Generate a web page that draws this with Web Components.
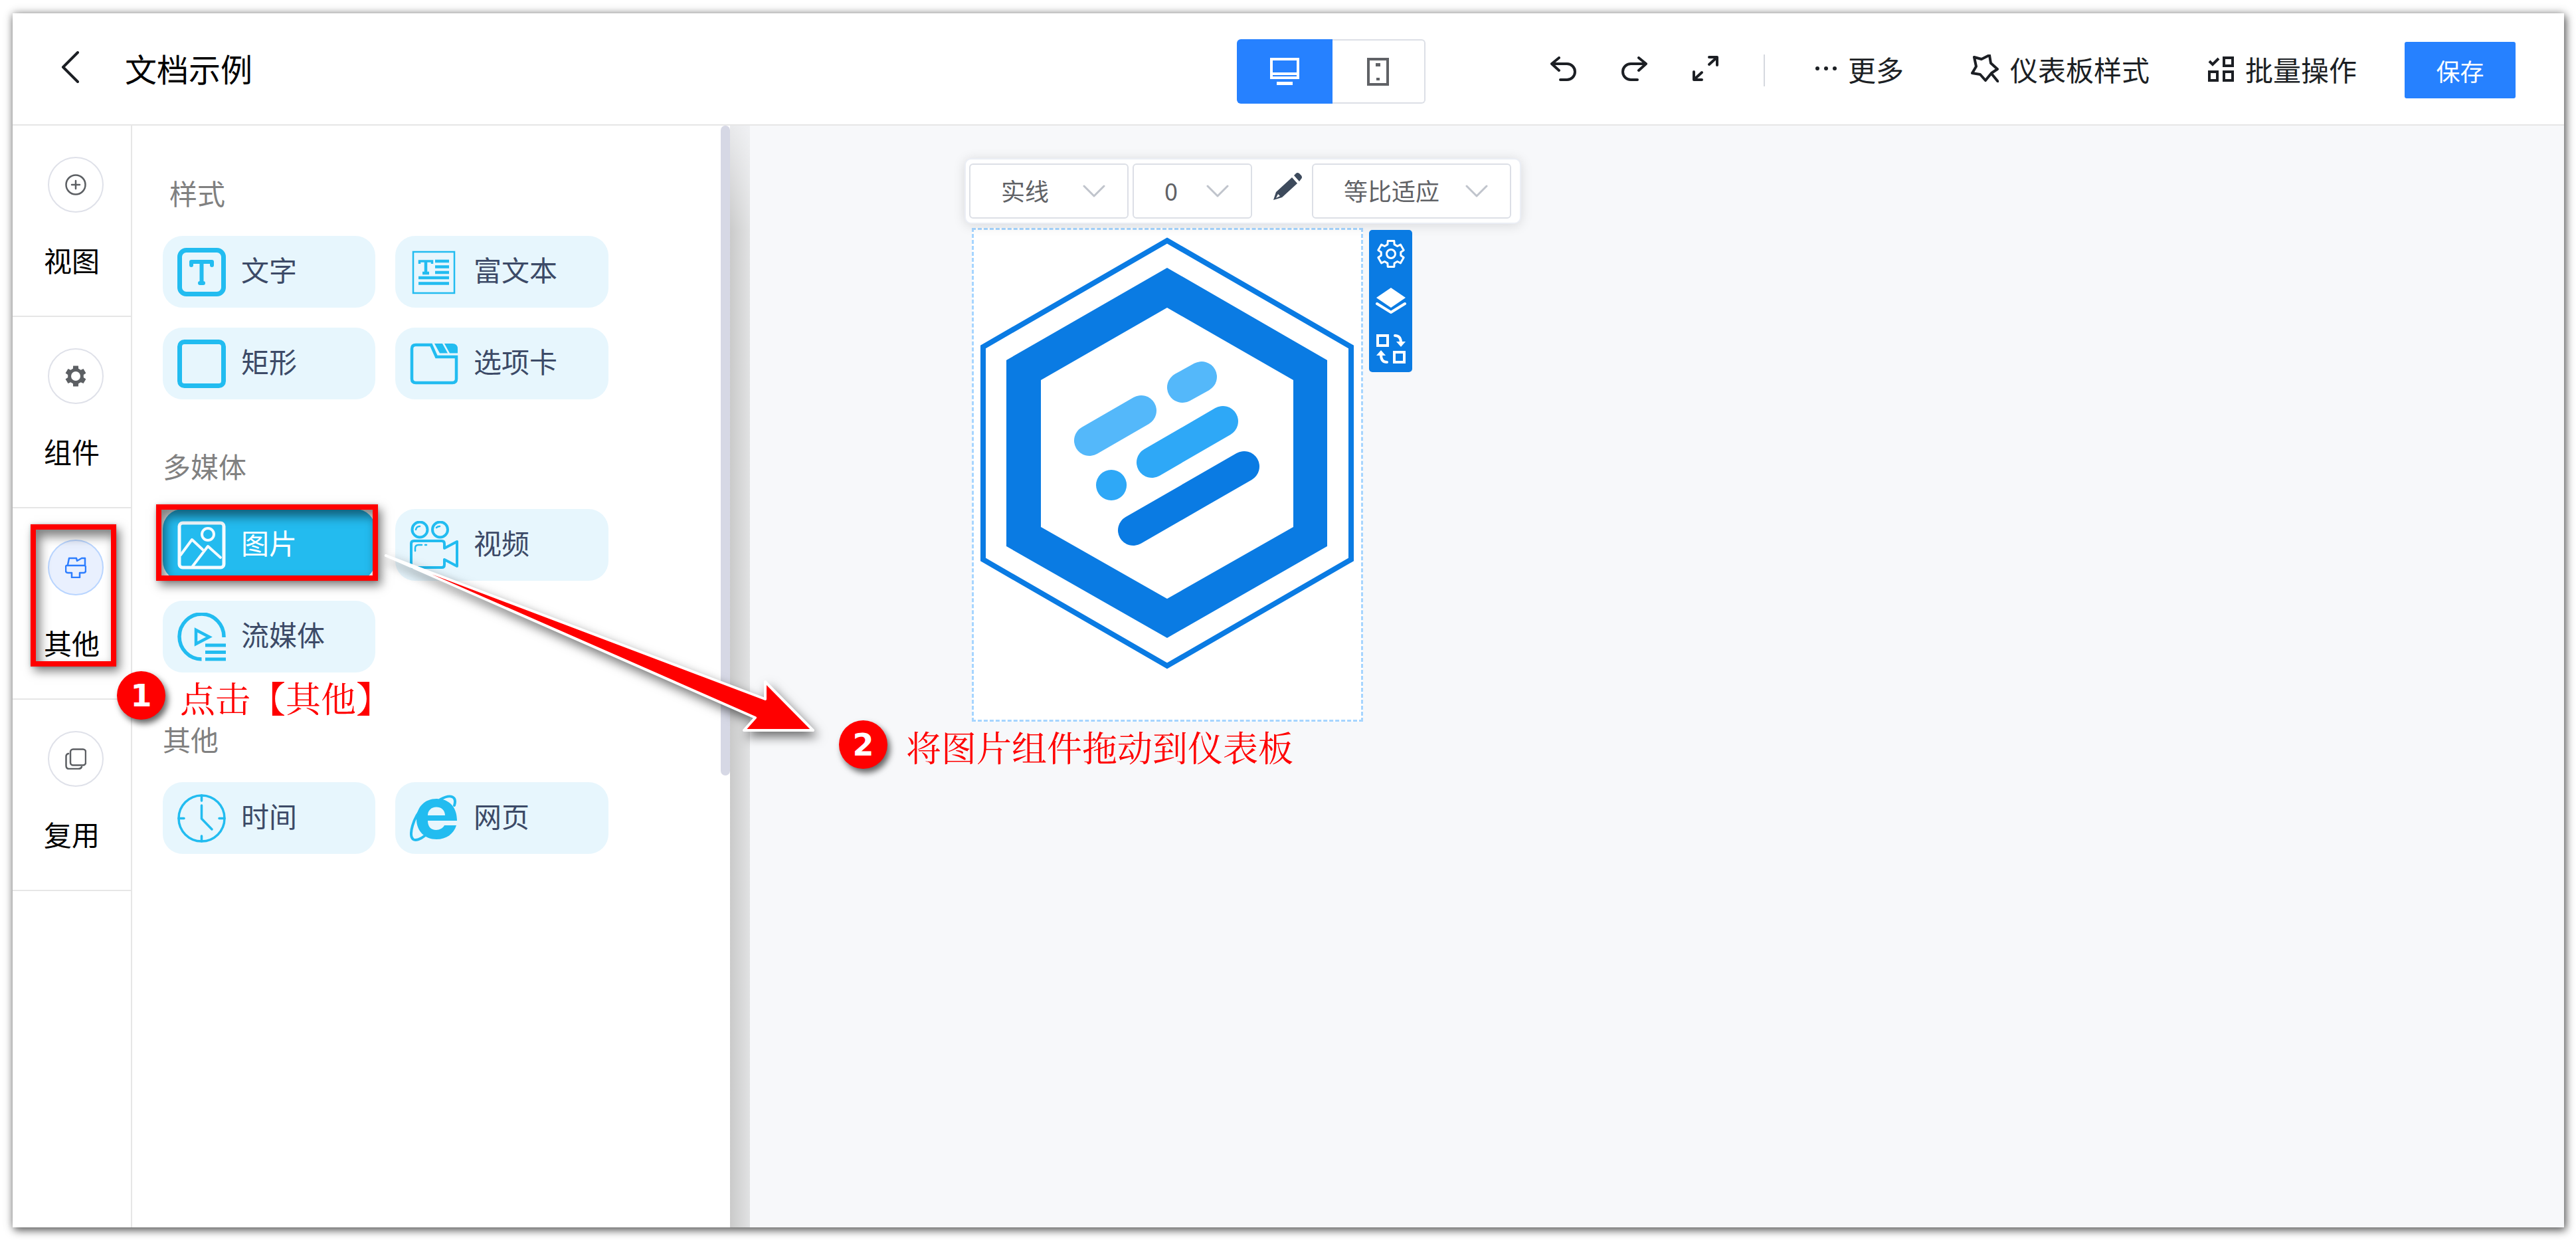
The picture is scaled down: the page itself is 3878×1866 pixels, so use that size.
<!DOCTYPE html>
<html lang="zh-CN">
<head>
<meta charset="utf-8">
<title>文档示例</title>
<style>
  html, body { margin: 0; height: 100%; background: #fff; overflow: hidden; }
  body {
    display: flex;
    box-sizing: border-box;
    padding: 20px 18px 19px 19px;
    font-family: "Noto Sans CJK SC", sans-serif;
    font-size: 42px;
    color: #000;
  }
</style>
</head>
<body>
<dash-editor>
  <editor-header slot="header" heading="文档示例">
    <device-toggle slot="tools"></device-toggle>
    <tool-button slot="tools" icon="undo" label="撤销"></tool-button>
    <tool-button slot="tools" icon="redo" label="恢复"></tool-button>
    <tool-button slot="tools" icon="expand" label="全屏"></tool-button>
    <tool-divider slot="tools"></tool-divider>
    <tool-button slot="tools" class="more" icon="dots">更多</tool-button>
    <tool-button slot="tools" class="theme" icon="star">仪表板样式</tool-button>
    <tool-button slot="tools" class="batch" icon="batch">批量操作</tool-button>
    <save-button slot="tools">保存</save-button>
  </editor-header>

  <nav-rail slot="rail">
    <rail-item icon="plus">视图</rail-item>
    <rail-item icon="gear">组件</rail-item>
    <rail-item icon="brush" active>其他</rail-item>
    <rail-item icon="copy">复用</rail-item>
  </nav-rail>

  <component-panel slot="panel">
    <component-group heading="样式" indent>
      <component-card icon="text">文字</component-card>
      <component-card icon="rich">富文本</component-card>
      <component-card icon="rect">矩形</component-card>
      <component-card icon="tabs">选项卡</component-card>
    </component-group>
    <component-group heading="多媒体">
      <component-card icon="image" active>图片</component-card>
      <component-card icon="video">视频</component-card>
      <component-card icon="stream">流媒体</component-card>
    </component-group>
    <component-group heading="其他">
      <component-card icon="clock">时间</component-card>
      <component-card icon="web">网页</component-card>
    </component-group>
  </component-panel>

  <design-canvas slot="canvas">
    <image-widget></image-widget>
    <border-toolbar></border-toolbar>
    <widget-actions></widget-actions>
  </design-canvas>

  <highlight-box slot="notes" class="nav"></highlight-box>
  <highlight-box slot="notes" class="card"></highlight-box>
  <drag-arrow slot="notes"></drag-arrow>
  <step-note slot="notes" class="one" number="1">点击【其他】</step-note>
  <step-note slot="notes" class="two" number="2">将图片组件拖动到仪表板</step-note>
</dash-editor>

<script>
const gear = (c, outer, inner) => {
  const pts = [];
  for (let i = 0; i < 6; i++) {
    const a = i * 60 - 90;
    for (const [d, r] of [[-20, inner], [-14, outer], [14, outer], [20, inner]]) {
      const t = (a + d) * Math.PI / 180;
      pts.push((c + r * Math.cos(t)).toFixed(1) + ',' + (c + r * Math.sin(t)).toFixed(1));
    }
  }
  return pts.join(' ');
};

// name: [width, height, markup]
const ICONS = {
  back: [28, 48, '<path d="M25 2 3 24 25 46" stroke-width="4"/>'],
  undo: [39, 37, '<path d="M13 2 2 11 13 21M2 11H25A12 12 0 0 1 25 35H15" stroke-width="4"/>'],
  redo: [39, 37, '<path d="M26 2 37 11 26 21M37 11H14A12 12 0 0 0 14 35H24" stroke-width="4"/>'],
  expand: [39, 38, '<path d="M25 2H37V14M36 3 25 13M2 24V36H14M3 35 14 25" stroke-width="4"/>'],
  dots: [32, 8, '<g fill="currentColor" stroke="none"><circle cx="3" cy="4" r="3"/><circle cx="16" cy="4" r="3"/><circle cx="29" cy="4" r="3"/></g>'],
  star: [42, 42, '<path d="M5 4 16 7 28 1 30 13 40 22 31 28 22 39 14 30 2 28 8 18ZM32 30 41 41" stroke-width="4"/>'],
  batch: [39, 39, '<path d="M2 8 7 13 16 4M24 3H37V15H24ZM2 24H14V37H2ZM24 24H37V37H24Z" stroke-width="4" stroke-linecap="butt" stroke-linejoin="miter"/>'],
  monitor: [44, 42, '<path fill="currentColor" stroke="none" fill-rule="evenodd" d="M0 0H44V32H0ZM4 4V22H40V4ZM4 26V28H40V26ZM10 36H34V41H10Z"/>'],
  phone: [33, 42, '<path d="M2 2H31V40H2Z" stroke-width="4" stroke-linejoin="miter"/><path d="M13 8H20V13H13ZM14 30H19V34H14Z" fill="currentColor" stroke="none"/>'],
  plus: [32, 32, '<circle cx="16" cy="16" r="14.5" stroke-width="2.5"/><path d="M16 10V22M10 16H22" stroke-width="2.5"/>'],
  gear: [32, 32, '<polygon points="' + gear(16, 16, 12) + '" fill="currentColor" stroke="none"/><circle cx="16" cy="16" r="7" fill="#fff" stroke="none"/>'],
  brush: [32, 32, '<path d="M6 2H17L18 6 25 2H30V13L31 15V21Q31 24 28 24H22V31H10V24H4Q1 24 1 21V14L4 12ZM2 13H30" stroke-width="2.5"/>'],
  copy: [32, 32, '<rect x="8" y="1.5" width="23" height="24" rx="4" stroke-width="2.5"/><path d="M5 8Q1.500 9 1.500 12V26Q1.500 31 6 31H20Q24 31 25 28" stroke-width="2.5"/>'],
  text: [73, 73, '<rect x="3.500" y="3.500" width="66" height="66" rx="10" stroke-width="7"/><path d="M21 26V21H52V26M36.500 21V53M34 53H39" stroke-width="6"/>'],
  rich: [73, 73, '<rect x="5" y="6" width="62" height="62" stroke-width="2.500" stroke-linejoin="miter"/><path d="M14.500 24V20H33.500V24" stroke-width="3.500" stroke-linecap="butt" stroke-linejoin="miter"/><path d="M24 20V38M19 38H29" stroke-width="4.500" stroke-linecap="butt"/><path d="M38 20H59M38 28.500H59M38 37H59M13 45H59M13 53.500H59" stroke-width="4.500" stroke-linecap="butt"/>'],
  rect: [73, 73, '<rect x="3.500" y="3.500" width="66" height="66" rx="7" stroke-width="7"/>'],
  tabs: [73, 73, '<path d="M9 8H32L40 26H70V59Q70 65 64 65H9Q3 65 3 59V14Q3 8 9 8Z" stroke-width="4.500" stroke-linejoin="miter"/><path d="M37 6H49L57 20.500H45ZM52 6H64Q72 6 72 14V20.500H60Z" fill="currentColor" stroke="none"/>'],
  image: [73, 73, '<rect x="3" y="3" width="67" height="67" rx="5" stroke-width="5"/><circle cx="46" cy="20" r="9" stroke-width="4"/><path d="M5 51 22 28 38 43M23 68 46 38 65 55" stroke-width="4"/>'],
  video: [73, 73, '<circle cx="15" cy="13" r="11.500" stroke-width="4"/><circle cx="45.500" cy="13" r="11.500" stroke-width="4"/><path d="M6 30H48Q52 30 52 34V41L71 31V68L52 58V66Q52 70 48 70H6Q2 70 2 66V34Q2 30 6 30Z" stroke-width="4"/><path d="M8 45V41Q8 36 13 36H18M23 36H25M9 13Q10 8 15 8M40 10Q42 8 45 8" stroke-width="2.500"/>'],
  stream: [73, 73, '<path d="M70 37A33.500 34 0 1 0 36.500 70" stroke-width="5.500" stroke-linecap="butt"/><path d="M28 26V47L48 36.500Z" stroke-width="4.500" stroke-linejoin="miter"/><path d="M42 49H73M42 59.500H73M42 70H73" stroke-width="5" stroke-linecap="butt"/>'],
  clock: [73, 73, '<circle cx="36.500" cy="36.500" r="34.500" stroke-width="3.500"/><path d="M36.500 2V10M36.500 63V71M2 36.500H10M63 36.500H71M36.500 17V37L52 53" stroke-width="3.500"/>'],
  web: [73, 73, '<path d="M71 40H27C27 49 32 54 39.500 54 45 54 50 51 52 47H70C66 60 55 68 40 68 22 68 10 55 10 38 10 19 23 7 40 7 60 7 71 20 71 40ZM27 32H53C53 24 47 19.500 40 19.500 32 19.500 27 25 27 32Z" fill="currentColor" fill-rule="evenodd" stroke="none"/><path d="M67 17C71 4 62 -1 46 8M21 18C4 36-2 62 5 68 9 71 17 67 22 63" stroke-width="4"/>'],
  chevron: [34, 20, '<path d="M2 2 17 17 32 2" stroke-width="3"/>'],
  pencil: [44, 42, '<path d="M31 4 34 1Q36-1 39 1L42 4Q44 7 42 9L39 13ZM28 7 36 16 13 37 0 41 4 29ZM4 38 10 35 7 32Z" fill="currentColor" fill-rule="evenodd" stroke="none"/>'],
  cog: [44, 44, '<polygon points="' + gear(22, 20, 15) + '" stroke-width="3"/><circle cx="22" cy="22" r="6.500" stroke-width="3"/>'],
  layers: [46, 42, '<path d="M23 1 45 16 23 31 1 16Z" fill="currentColor" stroke="none"/><path d="M2 25 23 38 44 25" stroke-width="4"/>'],
  swap: [46, 46, '<path d="M3 3H18V18H3ZM28 28H43V43H28Z" stroke-width="4" stroke-linejoin="miter"/><path d="M29 3Q38 3 38 14M8 32Q8 43 17 43" stroke-width="4"/><path d="M31 12H45L38 20ZM1 33H15L8 25Z" fill="currentColor" stroke="none"/>']
};

const svg = name => {
  const [w, h, body] = ICONS[name];
  return `<svg width="${w}" height="${h}" viewBox="0 0 ${w} ${h}" fill="none" stroke="currentColor" stroke-linecap="round" stroke-linejoin="round" aria-hidden="true">${body}</svg>`;
};

const BASE = `:host,*{box-sizing:border-box}button,select{font:inherit;color:inherit;margin:0;padding:0;border:0;background:none;cursor:pointer}svg{display:block;flex:none}`;

const define = (name, css, html) => customElements.define(name, class extends HTMLElement {
  constructor() {
    super();
    const markup = typeof html === 'function' ? html(this) : html;
    this.attachShadow({ mode: 'open' }).innerHTML = `<style>${BASE}${css}</style>${markup}`;
  }
});

define('dash-editor', `
  :host{position:relative;display:flex;flex-direction:column;flex:1;min-width:0;background:#fff;
    box-shadow:0 0 12px rgba(0,0,0,.35),3px 5px 12px rgba(0,0,0,.5)}
  main{display:flex;flex:1;min-height:0}
  .edge{flex:none;width:30px;background:linear-gradient(rgba(246,247,250,.7),rgba(246,247,250,0) 160px),linear-gradient(90deg,#cacaca,#e1e2e3)}
  slot[name=canvas]{display:flex;flex:1}
  ::slotted(highlight-box),::slotted(step-note),::slotted(drag-arrow){position:absolute}
  ::slotted(highlight-box.nav){left:27px;top:769px;width:129px;height:214px}
  ::slotted(highlight-box.card){left:216px;top:739px;width:334px;height:115px}
  ::slotted(drag-arrow){left:556px;top:810px}
  ::slotted(step-note.one){left:157px;top:990px;--gap:22px}
  ::slotted(step-note.two){left:1244px;top:1064px;--gap:28px}
`, `<slot name="header"></slot>
  <main><slot name="rail"></slot><slot name="panel"></slot><div class="edge"></div><slot name="canvas"></slot></main>
  <slot name="notes"></slot>`);

define('editor-header', `
  :host{display:block;flex:none}
  header{display:flex;align-items:center;height:169px;padding:4px 73px 0;border-bottom:2px solid #e6e6e6;color:#1c1f24}
  .back{display:flex;padding-bottom:10px}
  h1{margin:0 auto 0 68px;padding-bottom:8px;font-size:48px;line-height:60px;font-weight:400;color:#000}
  nav{display:flex;align-items:center}
  ::slotted(tool-button){margin-right:68px}
  ::slotted(device-toggle){margin-right:188px}
  ::slotted(tool-divider){margin-right:76px}
  ::slotted(.more){margin-right:101px}
  ::slotted(.theme){margin-right:88px}
  ::slotted(.batch){margin-right:72px}
`, el => `<header><button class="back" aria-label="返回">${svg('back')}</button><h1>${el.getAttribute('heading')}</h1><nav><slot name="tools"></slot></nav></header>`);

define('device-toggle', `
  :host{display:flex;padding-top:4px}
  button{display:flex;align-items:center;justify-content:center;height:97px;width:144px;background:#2681ff;color:#fff;border-radius:6px 0 0 6px}
  button+button{width:140px;background:#fff;color:#606266;border:2px solid #dcdfe6;border-left:0;border-radius:0 6px 6px 0}
`, `<button aria-label="电脑" aria-pressed="true">${svg('monitor')}</button><button aria-label="手机" aria-pressed="false">${svg('phone')}</button>`);

define('tool-button', `
  :host{display:block}
  button{display:flex;align-items:center;gap:17px;font-size:42px;line-height:60px;color:#1c1f24}
  svg{margin-bottom:5px}
  span{padding-bottom:4px}
`, el => {
  const label = el.getAttribute('label');
  return `<button${label ? ` aria-label="${label}"` : ''}>${svg(el.getAttribute('icon'))}${label ? '' : '<span><slot></slot></span>'}</button>`;
});

define('tool-divider', `:host{display:block;width:2px;height:48px;background:#d5d8df}`, '');

define('save-button', `
  :host{display:block}
  button{width:167px;height:85px;border-radius:3px;background:#2681ff;color:#fff;font-size:36px}
`, `<button><slot></slot></button>`);

define('nav-rail', `:host{display:block;flex:none;width:180px;border-right:2px solid #e6e6e6}`, `<nav><slot></slot></nav>`);

define('rail-item', `
  :host{display:block}
  button{display:flex;flex-direction:column;align-items:center;gap:41px;width:100%;height:288px;padding-top:47px;border-bottom:2px solid #e6e6e6;font-size:42px;line-height:60px;justify-content:flex-start}
  .ring{display:flex;align-items:center;justify-content:center;width:84px;height:84px;margin-left:12px;border:2px solid #dfe1e9;border-radius:50%;color:#5c5f63}
  :host([active]) .ring{background:#e9f0fe;border-color:#b9d5ff;color:#2c7dff}
`, el => `<button><span class="ring">${svg(el.getAttribute('icon'))}</span><span><slot></slot></span></button>`);

define('component-panel', `
  :host{display:flex;flex:none;width:900px;background:#fff}
  section{display:flex;flex-direction:column;flex:1;gap:78px;padding:79px 0 0 46px}
  .thumb{width:14px;height:978px;border-radius:7px;background:#d6d8e5}
`, `<section><slot></slot></section><div class="thumb"></div>`);

define('component-group', `
  :host{display:block}
  h2{margin:0 0 43px;font-size:42px;line-height:44px;font-weight:400;color:#808080}
  :host([indent]) h2{padding-left:10px}
  .grid{display:grid;grid-template-columns:320px 321px;gap:30px}
`, el => `<h2>${el.getAttribute('heading')}</h2><div class="grid"><slot></slot></div>`);

define('component-card', `
  :host{display:block}
  button{display:flex;align-items:center;gap:23px;width:100%;height:108px;padding:0 22px;border-radius:30px;background:#e7f6fd;color:#3c4a67;font-size:42px;line-height:60px}
  svg{color:#22bcf0}
  span{padding-bottom:8px}
  :host([active]) button{background:#23bbef;color:#fff}
  :host([active]) svg{color:#f4fbff}
`, el => `<button>${svg(el.getAttribute('icon'))}<span><slot></slot></span></button>`);

define('design-canvas', `
  :host{position:relative;display:block;flex:1;background:#f7f8fa}
  ::slotted(*){position:absolute}
  ::slotted(image-widget){left:334px;top:154px}
  ::slotted(border-toolbar){left:323px;top:49px}
  ::slotted(widget-actions){left:932px;top:157px}
`, `<slot></slot>`);

define('border-toolbar', `
  :host{display:flex;gap:6px;padding:6px 13px 6px 5px;border:2px solid #ebeef5;border-radius:10px;background:#fff;box-shadow:0 2px 18px rgba(0,0,0,.13)}
  label{position:relative;display:block;color:#606266}
  label svg{position:absolute;right:35px;top:32px;color:#c0c4cc;pointer-events:none}
  select{appearance:none;display:block;height:83px;padding:0 0 4px 46px;border:2px solid #dcdfe6;border-radius:6px;background:#fff;font-size:36px}
  .line{width:240px}.size{width:180px}.fit{width:300px}
  button{display:flex;align-items:center;justify-content:flex-end;width:78px;padding-right:8px;padding-bottom:14px;color:#3d4a5c}
`, `<label><select class="line" aria-label="线型"><option>实线</option></select>${svg('chevron')}</label>
  <label><select class="size" aria-label="线宽"><option>0</option></select>${svg('chevron')}</label>
  <button aria-label="边框颜色">${svg('pencil')}</button>
  <label><select class="fit" aria-label="适应方式"><option>等比适应</option></select>${svg('chevron')}</label>`);

define('image-widget', `
  :host{display:block;width:589px;height:743px;background:#fff;outline:3px dashed #a6d5ff;outline-offset:-3px}
`, `<svg width="588" height="742" viewBox="0 0 588 742" fill="none" stroke-linecap="round" role="img" aria-label="图片">
  <path d="M294 19 571 179V499L294 659 17 499V179Z" stroke="#0a7be3" stroke-width="8"/>
  <path d="M294 60 535 199V479L294 617 52 479V199ZM294 120 104 229V450L294 558 484 450V229Z" fill="#0a7be3" fill-rule="evenodd"/>
  <g stroke-width="46">
    <path d="M177 320 255 275M317 240 346 224" stroke="#54b8fa"/>
    <path d="M210 387H210.100M271 353 378 291" stroke="#2ea8f7"/>
    <path d="M243 455 410 359" stroke="#0a7be3"/>
  </g></svg>`);

define('widget-actions', `
  :host{display:flex;flex-direction:column;align-items:center;gap:28px;width:65px;padding:14px 0 12px;border-radius:5px;background:#0a7be3;color:#fff}
  button{display:flex}
`, `<button aria-label="设置">${svg('cog')}</button><button aria-label="图层">${svg('layers')}</button><button aria-label="替换">${svg('swap')}</button>`);

define('highlight-box', `
  :host{display:block;border:8px solid #f00;pointer-events:none;
    box-shadow:5px 7px 14px rgba(0,0,0,.5),0 0 4px rgba(0,0,0,.2),inset 6px 10px 16px rgba(0,0,0,.5)}
`, '');

define('step-note', `
  :host{display:flex;align-items:center;gap:var(--gap);white-space:nowrap}
  b{display:flex;align-items:center;justify-content:center;width:73px;height:73px;border-radius:50%;background:#f00;color:#fff;
    font:700 46px/60px "DejaVu Sans",sans-serif;box-shadow:4px 6px 10px rgba(0,0,0,.6)}
  span{padding-top:4px;font:400 53px/60px "Noto Serif CJK SC","Noto Sans CJK SC",serif;color:#f00}
`, el => `<b>${el.getAttribute('number')}</b><span><slot></slot></span>`);

define('drag-arrow', `
  :host{display:block;pointer-events:none}
  svg{filter:drop-shadow(5px 8px 8px rgba(0,0,0,.55))}
`, `<svg width="680" height="310" viewBox="0 0 680 310"><path d="M6 6 577 222V196L649 269H545L562 250Z" fill="#f00" stroke="#fff" stroke-width="4" stroke-linejoin="round"/></svg>`);
</script>
</body>
</html>
